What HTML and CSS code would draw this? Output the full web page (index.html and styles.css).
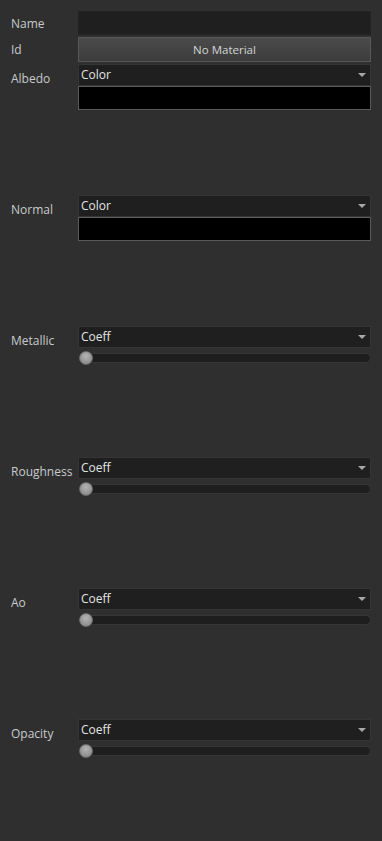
FILE: index.html
```html
<!DOCTYPE html>
<html lang="en">
<head>
    <meta charset="UTF-8">
    <meta name="viewport" content="width=device-width, initial-scale=1.0">
    <title>Material Inspector</title>
    <link rel="stylesheet" href="styles.css">
</head>
<body>
    <div class="panel">
        <div class="row row-name">
            <label class="label">Name</label>
            <input type="text" class="text-field">
        </div>

        <div class="row row-id">
            <label class="label">Id</label>
            <button class="btn">No Material</button>
        </div>

        <div class="section">
            <label class="label label-top">Albedo</label>
            <div class="field">
                <div class="combo">Color<span class="arrow"></span></div>
                <div class="swatch"></div>
            </div>
        </div>

        <div class="section">
            <label class="label label-top">Normal</label>
            <div class="field">
                <div class="combo">Color<span class="arrow"></span></div>
                <div class="swatch"></div>
            </div>
        </div>

        <div class="section">
            <label class="label label-top">Metallic</label>
            <div class="field">
                <div class="combo">Coeff<span class="arrow"></span></div>
                <div class="slider"><div class="track"></div><div class="handle"></div></div>
            </div>
        </div>

        <div class="section">
            <label class="label label-top">Roughness</label>
            <div class="field">
                <div class="combo">Coeff<span class="arrow"></span></div>
                <div class="slider"><div class="track"></div><div class="handle"></div></div>
            </div>
        </div>

        <div class="section">
            <label class="label label-top">Ao</label>
            <div class="field">
                <div class="combo">Coeff<span class="arrow"></span></div>
                <div class="slider"><div class="track"></div><div class="handle"></div></div>
            </div>
        </div>

        <div class="section">
            <label class="label label-top">Opacity</label>
            <div class="field">
                <div class="combo">Coeff<span class="arrow"></span></div>
                <div class="slider"><div class="track"></div><div class="handle"></div></div>
            </div>
        </div>
    </div>
</body>
</html>
```

FILE: styles.css
```css
* {
    margin: 0;
    padding: 0;
    box-sizing: border-box;
}

html, body {
    background: #2f2f2f;
}

body {
    font-family: 'Open Sans', 'DejaVu Sans', sans-serif;
    font-size: 12px;
    color: #c4c4c4;
    width: 382px;
    height: 841px;
    overflow: hidden;
}

.panel {
    padding: 11px 11px 0 11px;
    display: flex;
    flex-direction: column;
}

.row,
.section {
    display: grid;
    grid-template-columns: 67px 293px;
}

.row-name {
    height: 24px;
    margin-bottom: 2px;
}

.row-id {
    height: 25px;
    margin-bottom: 2px;
}

.section {
    height: 131px;
    align-items: start;
}

.label {
    color: #c8cbcc;
    white-space: nowrap;
    display: flex;
    align-items: center;
}

.label-top {
    height: 22px;
    margin-top: 3px;
}

.text-field {
    width: 100%;
    height: 24px;
    background: #1f1f1f;
    border: 1px solid #232323;
    outline: none;
    color: #ddd;
}

.btn {
    width: 100%;
    height: 25px;
    background: linear-gradient(#4a4a4a, #3d3d3d);
    border: 1px solid #585858;
    color: #d4d4d4;
    font-family: inherit;
    font-size: 11.5px;
}

.field {
    display: flex;
    flex-direction: column;
}

.combo {
    position: relative;
    height: 22px;
    background: #1f1f1f;
    border: 1px solid #353535;
    color: #e4e4e4;
    padding-left: 2px;
    line-height: 20px;
}

.arrow {
    position: absolute;
    right: 4px;
    top: 8px;
    width: 0;
    height: 0;
    border-left: 4px solid transparent;
    border-right: 4px solid transparent;
    border-top: 4px solid #a8a8a8;
}

.swatch {
    height: 24px;
    background: #000;
    border: 1px solid #5a5a5a;
}

.slider {
    position: relative;
    height: 16px;
    margin-top: 2px;
    display: flex;
    align-items: center;
}

.track {
    width: 100%;
    height: 10px;
    background: #1e1e1e;
    border: 1px solid #363636;
    border-radius: 5px;
}

.handle {
    position: absolute;
    left: 1px;
    top: 1px;
    width: 14px;
    height: 14px;
    border-radius: 50%;
    background: radial-gradient(circle at 50% 35%, #b4b4b4, #808080);
    border: 1px solid #6a6a6a;
}
```
